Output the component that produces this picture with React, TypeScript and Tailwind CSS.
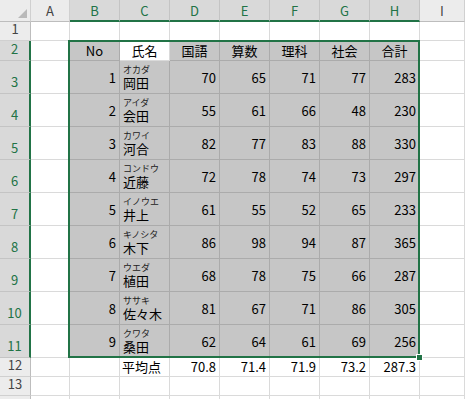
import React from "react";

const cols = ["A", "B", "C", "D", "E", "F", "G", "H", "I"];

const students = [
  { no: 1, kana: "オカダ", name: "岡田", s: [70, 65, 71, 77, 283] },
  { no: 2, kana: "アイダ", name: "会田", s: [55, 61, 66, 48, 230] },
  { no: 3, kana: "カワイ", name: "河合", s: [82, 77, 83, 88, 330] },
  { no: 4, kana: "コンドウ", name: "近藤", s: [72, 78, 74, 73, 297] },
  { no: 5, kana: "イノウエ", name: "井上", s: [61, 55, 52, 65, 233] },
  { no: 6, kana: "キノシタ", name: "木下", s: [86, 98, 94, 87, 365] },
  { no: 7, kana: "ウエダ", name: "植田", s: [68, 78, 75, 66, 287] },
  { no: 8, kana: "ササキ", name: "佐々木", s: [81, 67, 71, 86, 305] },
  { no: 9, kana: "クワタ", name: "桑田", s: [62, 64, 61, 69, 256] },
];

const subjects = ["国語", "算数", "理科", "社会", "合計"];
const averages = ["70.8", "71.4", "71.9", "73.2", "287.3"];

const ColHeader = ({ label, selected }: { label: string; selected: boolean }) => (
  <div
    className={
      selected
        ? "flex items-center justify-center border-r border-b-2 border-r-[#c4c4c4] border-b-[#217346] bg-[#d9d9d9] text-[#217346]"
        : "flex items-center justify-center border-r border-b border-r-[#d0d0d0] border-b-[#bdbdbd] bg-[#ececec] text-[#444]"
    }
  >
    <span className="pt-[1px]">{label}</span>
  </div>
);

const RowHeader = ({ n, selected }: { n?: number; selected: boolean }) => (
  <div
    className={
      selected
        ? "flex items-end justify-center border-b border-r-2 border-b-[#c4c4c4] border-r-[#217346] bg-[#d9d9d9] pb-[2px] text-[#217346]"
        : "flex items-end justify-center border-b border-r border-b-[#d0d0d0] border-r-[#bdbdbd] bg-[#ececec] pb-[2px] text-[#444]"
    }
  >
    {n}
  </div>
);

const Blank = () => <div className="border-r border-b border-[#dadada]" />;

const Sel = ({ children, className = "" }: { children?: React.ReactNode; className?: string }) => (
  <div className={"border-r border-b border-[#ababab] bg-[#c6c6c6] " + className}>{children}</div>
);

const Num = ({ v }: { v: number }) => (
  <Sel className="flex items-end justify-end pr-[3px] pb-[9px] leading-none">{v}</Sel>
);

export default function App() {
  return (
    <div className="relative h-[399px] w-[465px] overflow-hidden bg-white font-['Noto_Sans_CJK_JP',sans-serif] text-[13px] text-black">
      <div className="grid grid-cols-[31px_39px_repeat(7,50px)_1fr] grid-rows-[22px_19px_20px_repeat(9,33px)_19px_19px_19px]">
        {/* column headers */}
        <div className="flex items-end justify-end border-r border-b border-r-[#d0d0d0] border-b-[#bdbdbd] bg-[#ececec] p-[3px]">
          <svg width="9" height="9" viewBox="0 0 9 9">
            <polygon points="9,0 9,9 0,9" fill="#b9b9b9" />
          </svg>
        </div>
        {cols.map((c, i) => (
          <ColHeader key={c} label={c} selected={i >= 1 && i <= 7} />
        ))}

        {/* row 1 */}
        <RowHeader n={1} selected={false} />
        {cols.map((c) => (
          <Blank key={c} />
        ))}

        {/* row 2 */}
        <RowHeader n={2} selected />
        <Blank />
        <Sel className="flex items-center justify-center">No</Sel>
        <div className="flex items-center justify-center border-r border-b border-[#dadada] bg-white">氏名</div>
        {subjects.map((s) => (
          <Sel key={s} className="flex items-center justify-center">
            {s}
          </Sel>
        ))}
        <Blank />

        {/* rows 3-11 */}
        {students.map((st, i) => (
          <React.Fragment key={st.no}>
            <RowHeader n={i + 3} selected />
            <Blank />
            <Num v={st.no} />
            <Sel className="flex flex-col justify-end pl-[3px] pb-[2px]">
              <span className="text-[9px] leading-[11px] text-[#222]">{st.kana}</span>
              <span className="leading-[16px]">{st.name}</span>
            </Sel>
            {st.s.map((v, j) => (
              <Num key={j} v={v} />
            ))}
            <Blank />
          </React.Fragment>
        ))}

        {/* row 12 */}
        <RowHeader n={12} selected={false} />
        <Blank />
        <Blank />
        <div className="flex items-center border-r border-b border-[#dadada] pl-[2px]">平均点</div>
        {averages.map((a) => (
          <div key={a} className="flex items-center justify-end border-r border-b border-[#dadada] pr-[3px]">
            {a}
          </div>
        ))}
        <Blank />

        {/* rows 13-14 */}
        <RowHeader n={13} selected={false} />
        {cols.map((c) => (
          <Blank key={c} />
        ))}
        <RowHeader selected={false} />
        {cols.map((c) => (
          <Blank key={c} />
        ))}
      </div>

      {/* selection border */}
      <div className="pointer-events-none absolute left-[68px] top-[40px] h-[318px] w-[352px] border-2 border-[#217346]" />
      <div className="absolute left-[416px] top-[354px] h-[7px] w-[7px] border border-white bg-[#217346]" />
    </div>
  );
}
